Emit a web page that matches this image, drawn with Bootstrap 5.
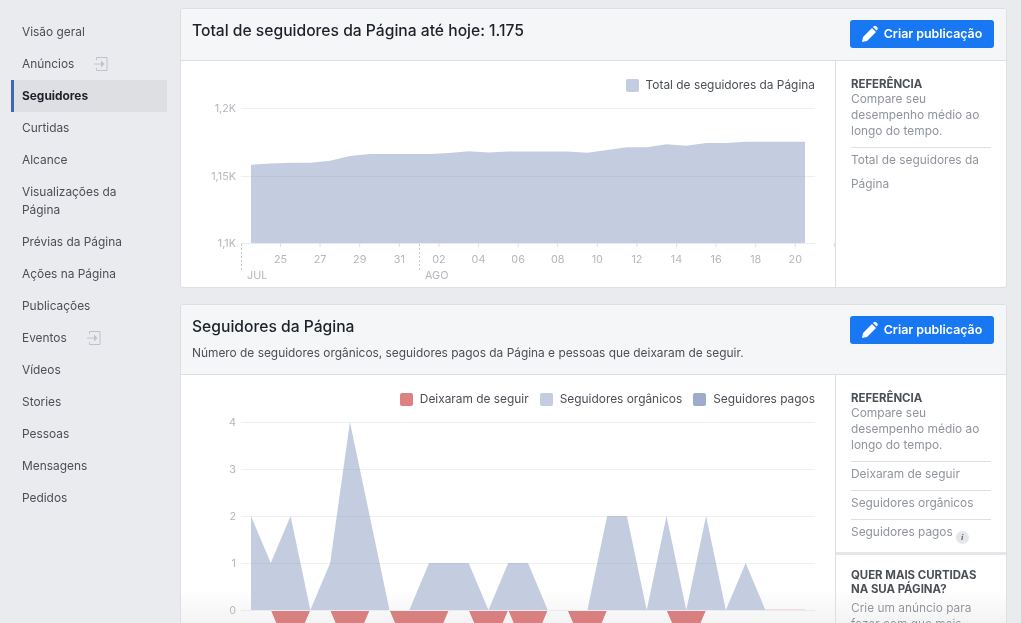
<!DOCTYPE html>
<html lang="pt-BR">
<head>
  <meta charset="UTF-8">
  <title>Seguidores</title>
  <link href="https://cdn.jsdelivr.net/npm/bootstrap@5.3.2/dist/css/bootstrap.min.css" rel="stylesheet">
  <style>
    html, body { height: 623px; overflow: hidden; }
    body { background-color: #e9ebee; font-family: Inter, "Liberation Sans", sans-serif; font-size: 11.9px; color: #4b4f56; }
    .side-col { width: 180px; flex: none; padding: 16px 13px 0 11px; }
    .side-link { display: flex; align-items: center; padding: 7px 20px 7px 11px; line-height: 18px; color: #4b4f56; text-decoration: none; }
    .side-link.current { background: #dddfe2; border-left: 3px solid #4267b2; padding-left: 8px; font-weight: 700; color: #1d2129; }
    .side-link svg { margin-left: 20px; flex: none; }
    .main-col { width: 827px; flex: none; padding-top: 8px; }
    .fb-card { border: 1px solid #dddfe2; border-radius: 3px; overflow: hidden; margin-bottom: 16px; --bs-card-bg: #fff; }
    .fb-head { background: #f5f6f7; border-bottom: 1px solid #dddfe2; padding: 11px 12px 12px 11px; }
    .fb-title { font-size: 15.65px; line-height: 20px; font-weight: 500; color: #1d2129; margin: 1px 0 0; }
    .fb-sub { font-size: 11.9px; line-height: 16px; margin: 8px 0 1px; color: #4b4f56; }
    .post-btn { background: #1877f2; border: 0; border-radius: 3px; color: #fff; font-size: 12.4px; font-weight: 600; height: 28px; width: 144px; padding: 0; display: flex; align-items: center; justify-content: center; gap: 6px; flex: none; }
    .post-btn:hover { background: #1877f2; color: #fff; }
    .chart-col { width: 655px; flex: none; border-right: 1px solid #dddfe2; }
    .chart-legend { display: flex; justify-content: flex-end; gap: 11px; padding: 15px 20px 2px 0; line-height: 18px; height: 35px; }
    .legend-item { display: flex; align-items: center; gap: 7px; }
    .swatch { width: 13px; height: 13px; border-radius: 2px; }
    .chart-col svg { display: block; }
    .chart-col text { font-family: Inter, "Liberation Sans", sans-serif; font-size: 10.8px; fill: #b4b7bd; }
    .ref-col { flex: 1; color: #90949c; }
    .ref-box { padding: 16px 15px 4px; line-height: 16px; }
    .ref-box h6 { font-size: 11.4px; line-height: 14px; font-weight: 700; color: #4b4f56; margin: 0; }
    .ref-row { border-top: 1px solid #dddfe2; padding: 3px 0 7px; line-height: 18px; margin: 0; }
    .ref-row.tall { line-height: 24px; padding: 0; }
    .ref-top { margin-bottom: 8px; }
    .ref-extra { border-top: 3px solid #e4e6ea; padding-top: 13px; }
    .info-dot { display: inline-flex; align-items: center; justify-content: center; width: 13px; height: 13px; border-radius: 50%; background: #e4e6ea; color: #606770; font-family: "Liberation Serif", serif; font-style: italic; font-weight: 700; font-size: 9px; line-height: 1; margin: 0 0 -6px 3px; vertical-align: -4px; }
    .bottom-fade { position: absolute; left: 0; right: 0; bottom: 0; height: 34px; background: linear-gradient(#fff, #f3f3f3); mix-blend-mode: darken; pointer-events: none; }
  </style>
</head>
<body>

<div class="d-flex">
  <nav class="side-col">
    <a class="side-link" href="#">Visão geral</a>
    <a class="side-link" href="#">Anúncios
      <svg width="14" height="14" viewBox="0 0 14 14" fill="none" stroke="#bec2c9"><path d="M2.500 .5h10.500v13H2.500M2.500 .5v2.500M2.500 11v2.500M0 7h8"/><path d="M7 3.500 10.500 7 7 10.500z" fill="#bec2c9" stroke="none"/></svg>
    </a>
    <a class="side-link current" href="#">Seguidores</a>
    <a class="side-link" href="#">Curtidas</a>
    <a class="side-link" href="#">Alcance</a>
    <a class="side-link" href="#">Visualizações da Página</a>
    <a class="side-link" href="#">Prévias da Página</a>
    <a class="side-link" href="#">Ações na Página</a>
    <a class="side-link" href="#">Publicações</a>
    <a class="side-link" href="#">Eventos
      <svg width="14" height="14" viewBox="0 0 14 14" fill="none" stroke="#bec2c9"><path d="M2.500 .5h10.500v13H2.500M2.500 .5v2.500M2.500 11v2.500M0 7h8"/><path d="M7 3.500 10.500 7 7 10.500z" fill="#bec2c9" stroke="none"/></svg>
    </a>
    <a class="side-link" href="#">Vídeos</a>
    <a class="side-link" href="#">Stories</a>
    <a class="side-link" href="#">Pessoas</a>
    <a class="side-link" href="#">Mensagens</a>
    <a class="side-link" href="#">Pedidos</a>
  </nav>

  <main class="main-col">
    <div class="card fb-card">
      <div class="fb-head d-flex justify-content-between align-items-start">
        <h2 class="fb-title">Total de seguidores da Página até hoje: 1.175</h2>
        <button class="btn post-btn" type="button">
          <svg width="16" height="16" viewBox="0 0 16 16" fill="#fff"><path d="M0 16l1-5L10 2l4 4-9 9zM11 1l1-1q1-.5 2 0l1.500 1.500q.5 1 0 2l-1 1z"/></svg>
          Criar publicação
        </button>
      </div>
      <div class="d-flex">
        <div class="chart-col">
          <div class="chart-legend">
            <span class="legend-item"><span class="swatch" style="background:#c4cde0"></span>Total de seguidores da Página</span>
          </div>
          <svg id="chartTotal" width="654" height="191" viewBox="181 96 654 191"></svg>
        </div>
        <div class="ref-col">
          <div class="ref-box">
            <h6>REFERÊNCIA</h6>
            <div class="ref-top">Compare seu desempenho médio ao longo do tempo.</div>
            <p class="ref-row tall">Total de seguidores da Página</p>
          </div>
        </div>
      </div>
    </div>

    <div class="card fb-card">
      <div class="fb-head d-flex justify-content-between align-items-start">
        <div>
          <h2 class="fb-title">Seguidores da Página</h2>
          <p class="fb-sub">Número de seguidores orgânicos, seguidores pagos da Página e pessoas que deixaram de seguir.</p>
        </div>
        <button class="btn post-btn" type="button">
          <svg width="16" height="16" viewBox="0 0 16 16" fill="#fff"><path d="M0 16l1-5L10 2l4 4-9 9zM11 1l1-1q1-.5 2 0l1.500 1.500q.5 1 0 2l-1 1z"/></svg>
          Criar publicação
        </button>
      </div>
      <div class="d-flex">
        <div class="chart-col">
          <div class="chart-legend">
            <span class="legend-item"><span class="swatch" style="background:#dd8080"></span>Deixaram de seguir</span>
            <span class="legend-item"><span class="swatch" style="background:#c4cde0"></span>Seguidores orgânicos</span>
            <span class="legend-item"><span class="swatch" style="background:#9dacca"></span>Seguidores pagos</span>
          </div>
          <svg id="chartFlow" width="654" height="213" viewBox="181 410 654 213"></svg>
        </div>
        <div class="ref-col">
          <div class="ref-box">
            <h6>REFERÊNCIA</h6>
            <div class="ref-top">Compare seu desempenho médio ao longo do tempo.</div>
            <p class="ref-row">Deixaram de seguir</p>
            <p class="ref-row">Seguidores orgânicos</p>
            <p class="ref-row">Seguidores pagos<span class="info-dot">i</span></p>
          </div>
          <div class="ref-box ref-extra">
            <h6>QUER MAIS CURTIDAS NA SUA PÁGINA?</h6>
            <div class="mt-1">Crie um anúncio para fazer com que mais pessoas curtam</div>
          </div>
        </div>
      </div>
    </div>
  </main>
</div>

<div class="bottom-fade"></div>

<script>
  const AREA = '#c4cde0', RED = '#d87f7f', GRID = 'rgba(120,130,150,.12)';
  const step = (805 - 251) / 28;
  const px = i => 251 + step * i;

  function line(x1, y1, x2, y2, stroke, extra) {
    return `<line x1="${x1}" y1="${y1}" x2="${x2}" y2="${y2}" stroke="${stroke}" ${extra || ''}/>`;
  }
  function label(x, y, txt, anchor) {
    return `<text x="${x}" y="${y}" text-anchor="${anchor}">${txt}</text>`;
  }

  // total de seguidores
  const tops = [164.7,163.5,162.8,162.8,160.7,156,154,154,154,154,153,151.3,152.6,151.6,151.5,151.5,151.4,152.7,150,147.3,147.3,144.3,145.7,143,143,141.7,141.7,141.7,141.7];
  let a = `<polygon fill="${AREA}" points="251,243 ${tops.map((y, i) => px(i) + ',' + y).join(' ')} 805,243"/>`;
  [108.5, 176.5].forEach(y => a += line(241, y, 815, y, GRID));
  a += line(241, 243.5, 815, 243.5, '#e9ebee');
  a += line(834.5, 243, 834.5, 247, '#dddfe2');
  [['1,2K',112],['1,15K',180],['1,1K',247]].forEach(l => a += label(236, l[1], l[0], 'end'));
  ['25','27','29','31','02','04','06','08','10','12','14','16','18','20'].forEach((d, i) => {
    const x = 280.5 + i * 39.6;
    a += line(x, 243, x, 247, '#dddfe2');
    a += label(x, 263, d, 'middle');
  });
  [241.5, 419.5].forEach(x => a += line(x, 244, x, 271, '#c4c6cb', 'stroke-dasharray="2 2"'));
  a += label(247, 279, 'JUL', 'start') + label(425, 279, 'AGO', 'start');
  document.getElementById('chartTotal').innerHTML = a;

  // seguidores da pagina
  const base = 610, unit = 47;
  const org = [2,1,2,0,1,4,2,0,0,1,1,1,0,1,1,0,0,0,2,2,0,2,0,2,0,1,0,0,0];
  const out = [0,0,1,0,0,1,0,0,1,1,0,0,1,0,1,0,0,1,0,0,0,0,1,0,0,0,0,0,0];
  const poly = (vals, sign, col) => `<polygon fill="${col}" points="251,${base} ${vals.map((v, i) => px(i) + ',' + (base - sign * v * unit)).join(' ')} 805,${base}"/>`;
  let b = poly(org, 1, AREA) + poly(out, -1, RED);
  b += line(765, 610, 805, 610, '#e3b9b9');
  [422.5, 469.5, 516.5, 563.5].forEach(y => b += line(241, y, 815, y, GRID));
  b += line(241, 610.5, 815, 610.5, '#e9ebee');
  [4,3,2,1,0].forEach((v, i) => b += label(236, 426 + i * 47, v, 'end'));
  document.getElementById('chartFlow').innerHTML = b;
</script>
<script src="https://cdn.jsdelivr.net/npm/bootstrap@5.3.2/dist/js/bootstrap.bundle.min.js"></script>
</body>
</html>
